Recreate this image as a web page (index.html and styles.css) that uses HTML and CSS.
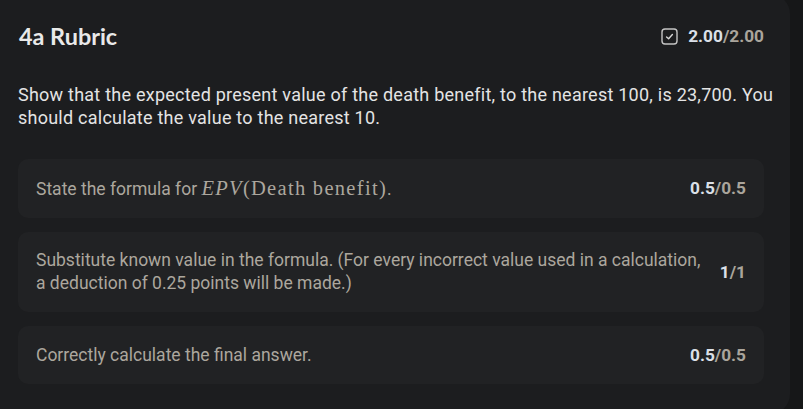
FILE: index.html
```html
<!DOCTYPE html>
<html>
<head>
<meta charset="utf-8">
<link rel="stylesheet" href="styles.css">
</head>
<body>
<div class="card">
  <div class="head">
    <h1 class="title">4a Rubric</h1>
    <div class="total">
      <svg class="check" width="17" height="17" viewBox="0 0 17 17" aria-hidden="true">
        <rect x="1" y="1" width="15" height="15" rx="3" fill="none" stroke="#c4c4c4" stroke-width="1.4"/>
        <path d="M5.6 8.9 L7.6 10.7 L11.4 6.6" fill="none" stroke="#d6d6d6" stroke-width="1.4" stroke-linecap="round" stroke-linejoin="round"/>
      </svg>
      <span class="got">2.00</span><span class="max">/2.00</span>
    </div>
  </div>
  <p class="question">Show that the expected present value of the death benefit, to the nearest 100, is 23,700. You should calculate the value to the nearest 10.</p>
  <div class="rows">
    <div class="row">
      <div class="crit">State the formula for <span class="math"><i>EPV</i>(Death benefit)</span>.</div>
      <div class="score"><span class="got">0.5</span><span class="max">/0.5</span></div>
    </div>
    <div class="row">
      <div class="crit">Substitute known value in the formula. (For every incorrect value used in a calculation, a deduction of 0.25 points will be made.)</div>
      <div class="score"><span class="got">1</span><span class="max">/1</span></div>
    </div>
    <div class="row">
      <div class="crit">Correctly calculate the final answer.</div>
      <div class="score"><span class="got">0.5</span><span class="max">/0.5</span></div>
    </div>
  </div>
</div>
</body>
</html>
```

FILE: styles.css
```css
html, body {
  margin: 0;
  padding: 0;
  background: #161718;
  overflow: hidden;
}
body {
  font-family: Roboto, "Liberation Sans", sans-serif;
}
.card {
  background: #1c1d1f;
  margin: -6px 13px 0 -8px;
  padding: 30px 26px 30px 26px;
  border-radius: 20px;
}
.head {
  display: flex;
  align-items: center;
  justify-content: space-between;
  height: 24px;
}
.title {
  margin: 0 0 0 1px;
  font-family: Lato, "Open Sans", sans-serif;
  font-weight: 700;
  font-size: 23.4px;
  color: #e9e9e9;
  line-height: 24px;
}
.total {
  display: flex;
  align-items: center;
  font-weight: 700;
  font-size: 17.25px;
}
.check {
  display: block;
  margin-right: 10px;
}
.got { color: #dbe0e8; }
.max { color: #aaa59c; }
.question {
  margin: 34.5px -14px 0 0;
  font-size: 18px;
  letter-spacing: 0.24px;
  line-height: 23px;
  color: #e4e4e4;
}
.rows {
  display: flex;
  flex-direction: column;
  gap: 14px;
  margin-top: 30.5px;
}
.row {
  background: #212224;
  border-radius: 10px;
  padding: 17.5px 18px 17px 18px;
  display: flex;
  align-items: center;
  justify-content: space-between;
  gap: 16px;
}
.crit {
  font-size: 17.5px;
  line-height: 23px;
  color: #aca79e;
}
.math {
  font-family: "Liberation Serif", "DejaVu Serif", serif;
  font-size: 20.5px;
  letter-spacing: 1.3px;
}
.score {
  font-weight: 700;
  font-size: 17.25px;
  line-height: 23px;
  white-space: nowrap;
}
```
